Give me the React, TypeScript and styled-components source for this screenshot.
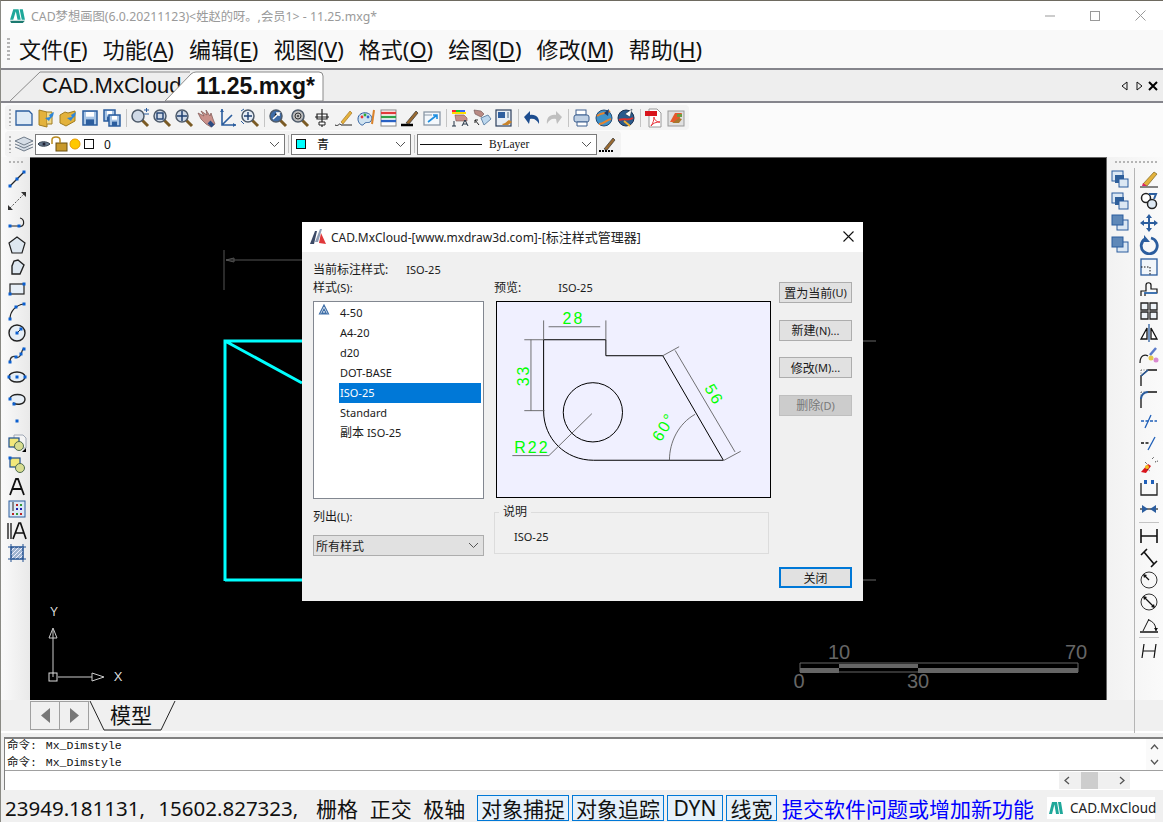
import React from 'react';
import styled, { createGlobalStyle } from 'styled-components';

const CJK = `"Noto Sans", "Noto Sans CJK SC", sans-serif`;
const BLUE = '#2b5d9e';
const LIGHT = '#a9c6e6';
const GOLD = '#e3b23c';
const DARK = '#222';

const GlobalStyle = createGlobalStyle`
  html, body { margin: 0; padding: 0; background: #f0f0f0; overflow: hidden; }
  * { box-sizing: border-box; }
`;

const Window = styled.div`
  width: 1163px;
  height: 822px;
  display: flex;
  flex-direction: column;
  overflow: hidden;
  background: #f0f0f0;
  border-top: 1px solid #6e6a60;
  border-left: 1px solid #8a8a84;
  font-family: ${CJK};
`;

const TitleBar = styled.div`
  height: 29px;
  flex: none;
  display: flex;
  align-items: center;
  background: #fff;
  padding-left: 8px;
  color: #9a9a9a;
  font-size: 12.3px;
  svg { flex: none; }
`;
const TitleText = styled.span`
  margin-left: 5px;
  white-space: nowrap;
`;
const WindowButtons = styled.div`
  margin-left: auto;
  display: flex;
  align-items: center;
  gap: 35px;
  padding-right: 17px;
  svg { display: block; }
`;

const MenuBar = styled.div`
  height: 38px;
  flex: none;
  display: flex;
  align-items: center;
  background: #f9f9f9;
  padding-left: 6px;
`;
const VGrip = styled.div`
  width: 3px;
  height: 22px;
  margin-right: 9px;
  background: repeating-linear-gradient(to bottom, #b5b5b5 0 2px, transparent 2px 4px);
`;
const MenuItem = styled.span`
  font-size: 22px;
  color: #111;
  white-space: nowrap;
  margin-right: 15px;
  line-height: 30px;
`;

const TabStrip = styled.div`
  height: 35px;
  flex: none;
  display: flex;
  align-items: stretch;
  background: #eee;
  border-top: 2px solid #85858c;
  border-bottom: 2px solid #85858c;
  padding-left: 9px;
  position: relative;
`;
const FileTab = styled.div<{ $active?: boolean }>`
  position: relative;
  width: ${(p) => (p.$active ? 160 : 180)}px;
  margin-left: ${(p) => (p.$active ? -25 : 0)}px;
  z-index: ${(p) => (p.$active ? 2 : 1)};
  padding-left: ${(p) => (p.$active ? 31 : 32)}px;
  padding-top: 1px;
  font-family: "Liberation Sans", "Noto Sans CJK SC", sans-serif;
  font-size: ${(p) => (p.$active ? 23 : 22)}px;
  font-weight: ${(p) => (p.$active ? 700 : 400)};
  line-height: 30px;
  color: #111;
  white-space: nowrap;
  overflow: hidden;
  svg { position: absolute; left: 0; top: 0; z-index: -1; }
`;
const TabArrows = styled.div`
  margin-left: auto;
  display: flex;
  align-items: center;
  gap: 4px;
  padding-right: 5px;
  svg { display: block; }
`;

const ToolRows = styled.div`
  height: 54px;
  flex: none;
  background: #fbfbfb;
  padding: 2px 0 0 4px;
`;
const ToolChip = styled.div<{ $w: number; $h: number }>`
  width: ${(p) => p.$w}px;
  height: ${(p) => p.$h}px;
  display: flex;
  align-items: center;
  background: #f3f3f3;
  border-radius: 4px;
  padding-left: 4px;
  margin-bottom: 1px;
`;
const SmallGrip = styled(VGrip)`
  height: 17px;
  width: 2px;
  margin-right: 2px;
`;
const Slot = styled.span`
  width: 22px;
  height: 22px;
  flex: none;
  display: flex;
  align-items: center;
  justify-content: center;
  svg { display: block; }
`;
const ToolSep = styled.span`
  width: 1px;
  height: 18px;
  margin: 0 2px 0 3px;
  flex: none;
  background: #c4c4c4;
`;
const Combo = styled.div<{ $w: number }>`
  width: ${(p) => p.$w}px;
  height: 21px;
  flex: none;
  display: flex;
  align-items: center;
  background: #fff;
  border: 1px solid #7a7a7a;
  font-size: 12px;
  color: #111;
  svg { display: block; flex: none; }
`;
const ComboChevron = styled.svg`
  margin-left: auto;
  margin-right: 4px;
  flex: none;
`;
const Swatch = styled.span<{ $fill: string }>`
  width: 10px;
  height: 10px;
  flex: none;
  margin-left: 4px;
  background: ${(p) => p.$fill};
  border: 1px solid #111;
`;
const ComboLabel = styled.span<{ $gap: number }>`
  margin-left: ${(p) => p.$gap}px;
`;
const LineSample = styled.span`
  width: 62px;
  height: 1px;
  margin-left: 2px;
  background: #111;
`;
const ByLayer = styled.span`
  margin-left: 7px;
  font-family: "Liberation Serif", serif;
  font-size: 11.5px;
`;

const Middle = styled.div`
  flex: none;
  height: 543px;
  display: flex;
`;
const LeftBar = styled.div`
  width: 29px;
  flex: none;
  display: flex;
  flex-direction: column;
  align-items: center;
  padding-top: 4px;
  padding-left: 2px;
  background: linear-gradient(to right, #fafafa, #e9e9e9);
`;
const HGrip = styled.div<{ $w: number }>`
  width: ${(p) => p.$w}px;
  height: 2px;
  flex: none;
  margin-bottom: 5px;
  background: repeating-linear-gradient(to right, #b5b5b5 0 2px, transparent 2px 4px);
`;
const Canvas = styled.div`
  width: 1077px;
  flex: none;
  position: relative;
  background: #000;
  border-top: 1px solid #666;
  border-right: 1px solid #666;
  overflow: hidden;
  > svg { position: absolute; left: 0; top: 0; }
`;
const RightBar = styled.div`
  flex: 1;
  display: flex;
  flex-direction: column;
  background: linear-gradient(to right, #f2f2f2, #fafafa);
  padding: 4px 0 0 2px;
`;
const RightGrip = styled(HGrip)`
  margin-left: 6px;
`;
const RightCols = styled.div`
  flex: 1;
  display: flex;
`;
const RightCol = styled.div<{ $rule?: boolean }>`
  width: ${(p) => (p.$rule ? 28 : 25)}px;
  flex: none;
  display: flex;
  flex-direction: column;
  padding-left: ${(p) => (p.$rule ? 3 : 0)}px;
  border-left: ${(p) => (p.$rule ? '1px solid #b5b5b5' : 'none')};
`;
const BarRule = styled.div`
  width: 20px;
  height: 1px;
  flex: none;
  margin: 2px 1px 2px;
  background: #c4c4c4;
`;

const Dialog = styled.div`
  position: absolute;
  left: 272px;
  top: 64px;
  width: 561px;
  height: 379px;
  background: #f0f0f0;
  display: flex;
  flex-direction: column;
  font-size: 11px;
  color: #1a1a1a;
`;
const Cjk = styled.span`
  font-size: 12px;
`;
const DialogTitle = styled.div`
  height: 30px;
  flex: none;
  display: flex;
  align-items: center;
  padding: 0 9px 2px 8px;
  background: #fff;
  font-size: 12px;
  color: #222;
  svg { display: block; flex: none; }
`;
const DialogTitleText = styled.span`
  margin-left: 5px;
`;
const TitleCjk = styled.span`
  font-size: 13px;
`;
const DialogClose = styled.svg`
  margin-left: auto;
`;
const DialogBody = styled.div`
  padding: 11px 11px 0;
`;
const CurrentRow = styled.div`
  height: 14px;
  line-height: 14px;
  display: flex;
  margin-bottom: 4px;
`;
const CurrentName = styled.span`
  margin-left: 18px;
`;
const Columns = styled.div`
  display: flex;
`;
const ListColumn = styled.div`
  width: 171px;
  flex: none;
`;
const PreviewColumn = styled.div`
  width: 277px;
  flex: none;
  margin-left: 10px;
`;
const ButtonColumn = styled.div`
  width: 73px;
  height: 306px;
  flex: none;
  margin: 1px 0 0 8px;
  display: flex;
  flex-direction: column;
`;
const FieldLabel = styled.div`
  height: 14px;
  line-height: 14px;
  margin-bottom: 6px;
  display: flex;
`;
const PreviewName = styled.span`
  margin-left: 37px;
`;
const StyleList = styled.div`
  height: 198px;
  padding-top: 1px;
  background: #fff;
  border: 1px solid #828790;
`;
const StyleRow = styled.div`
  height: 20px;
  display: flex;
  svg { display: block; margin: 1px 0 0 4px; }
`;
const RowIcon = styled.span`
  width: 25px;
  flex: none;
`;
const StyleName = styled.span<{ $selected?: boolean }>`
  flex: 1;
  margin-right: 2px;
  padding-left: 1px;
  line-height: 20px;
  background: ${(p) => (p.$selected ? '#0078d7' : 'transparent')};
  color: ${(p) => (p.$selected ? '#fff' : '#1a1a1a')};
`;
const PreviewBox = styled.div`
  width: 275px;
  height: 197px;
  margin-left: 2px;
  border: 1px solid #000;
  background: #f0f0ff;
  svg { display: block; }
`;
const ListLabel = styled(FieldLabel)`
  margin: 11px 0 11px;
`;
const DropDown = styled.div`
  height: 21px;
  display: flex;
  align-items: center;
  padding-left: 2px;
  background: #e1e1e1;
  border: 1px solid #adadad;
`;
const GroupBox = styled.div`
  position: relative;
  width: 275px;
  height: 42px;
  margin-top: 14px;
  padding: 16px 0 0 19px;
  border: 1px solid #dcdcdc;
  line-height: 15px;
`;
const GroupLegend = styled.span`
  position: absolute;
  left: 4px;
  top: -8px;
  padding: 0 4px;
  background: #f0f0f0;
  font-size: 12px;
  line-height: 14px;
`;
const DlgButton = styled.div<{ $disabled?: boolean; $primary?: boolean }>`
  height: 21px;
  flex: none;
  display: flex;
  align-items: center;
  justify-content: center;
  margin-bottom: 16.500px;
  white-space: nowrap;
  background: ${(p) => (p.$disabled ? '#cccccc' : '#e1e1e1')};
  border: ${(p) => (p.$primary ? '2px solid #0078d7' : p.$disabled ? '1px solid #bfbfbf' : '1px solid #adadad')};
  color: ${(p) => (p.$disabled ? '#787878' : '#1a1a1a')};
`;
const CloseButton = styled(DlgButton)`
  margin-top: auto;
  margin-bottom: 0;
`;

const LayoutTabs = styled.div`
  height: 33px;
  flex: none;
  display: flex;
  background: #f0f0f0;
  padding-left: 29px;
  position: relative;
  border-bottom: 2px solid #fff;
`;
const NavBtn = styled.div`
  width: 30px;
  height: 29px;
  flex: none;
  display: flex;
  align-items: center;
  justify-content: center;
  border: 1px solid #a0a0a0;
  margin-right: -1px;
  margin-top: 1px;
`;
const ModelTab = styled.div`
  position: relative;
  width: 87px;
  height: 30px;
  margin: 1px 0 0 1px;
  padding-left: 21px;
  font-size: 21px;
  line-height: 29px;
  color: #111;
  svg { position: absolute; left: 0; top: 0; }
`;
const BarTail = styled.span`
  position: absolute;
  left: 1133px;
  top: 0;
  bottom: -2px;
  width: 1px;
  background: #b5b5b5;
`;

const CommandBox = styled.div`
  height: 53px;
  flex: none;
  margin: 4px 0 0 3px;
  background: #fff;
  border-top: 2px solid #808080;
  border-left: 1px solid #808080;
  display: flex;
  flex-direction: column;
`;
const CommandLog = styled.div`
  height: 32px;
  flex: none;
  display: flex;
  border-bottom: 1px solid #a0a0a0;
`;
const CommandLines = styled.div`
  flex: 1;
  padding-left: 2px;
  margin-top: -2px;
  font-family: "Liberation Mono", "Noto Sans CJK SC", monospace;
  font-size: 11.5px;
  line-height: 17px;
  word-spacing: 2px;
  color: #111;
`;
const VScroll = styled.div`
  width: 17px;
  flex: none;
  display: flex;
  flex-direction: column;
  justify-content: space-between;
  align-items: center;
  padding: 5px 0;
  background: #fafafa;
`;
const CommandInput = styled.div`
  flex: 1;
  display: flex;
  justify-content: flex-end;
  padding-right: 33px;
`;
const HScroll = styled.div`
  width: 71px;
  height: 17px;
  margin-top: 1px;
  display: flex;
  align-items: center;
  justify-content: space-between;
  padding: 0 5px;
  background: #f0f0f0;
`;
const HThumb = styled.span`
  width: 17px;
  height: 17px;
  background: #cdcdcd;
  margin-right: 10px;
`;

const StatusBar = styled.div`
  flex: 1;
  margin-top: 3px;
  padding-bottom: 1px;
  display: flex;
  align-items: center;
  background: #f0f0f0;
  padding-left: 4px;
  font-size: 21px;
  color: #111;
  white-space: nowrap;
`;
const Coords = styled.span`
  width: 311px;
  flex: none;
  font-size: 20.5px;
  word-spacing: 8px;
`;
const StatusCell = styled.span`
  width: 53.67px;
  flex: none;
`;
const StatusToggle = styled.span<{ $w: number }>`
  width: ${(p) => p.$w}px;
  height: 26px;
  flex: none;
  margin-right: 3px;
  display: flex;
  align-items: center;
  justify-content: center;
  background: #e5f1fb;
  border: 1px solid #0078d7;
`;
const FeedbackLink = styled.span`
  color: #0000ff;
  margin-left: 2px;
  width: 265px;
  flex: none;
`;
const BrandBadge = styled.span`
  height: 22px;
  width: 108px;
  flex: none;
  display: flex;
  align-items: center;
  background: #fff;
  padding-left: 1px;
  font-size: 13.5px;
  color: #222;
  svg { display: block; flex: none; margin-right: 6px; }
`;

const Mag = ({ children, glass = '#cfd9e6' }: { children?: React.ReactNode; glass?: string }) => (
  <svg width="20" height="20" viewBox="0 0 20 20">
    <path d="M11 11l7 7" stroke="#7a5a24" strokeWidth="3" />
    <circle cx="8" cy="8" r="6" fill={glass} stroke="#4d5a6a" strokeWidth="1.5" />
    {children}
  </svg>
);

const Ico = ({ children }: { children: React.ReactNode }) => (
  <svg width="20" height="20" viewBox="0 0 20 20" fill="none">
    {children}
  </svg>
);

const Dot = ({ x, y }: { x: number; y: number }) => <rect x={x - 1.5} y={y - 1.5} width="3" height="3" fill="#0a5fd0" />;

const Floppy = ({ x = 3, y = 3, s = 14 }: { x?: number; y?: number; s?: number }) => (
  <g>
    <rect x={x} y={y} width={s} height={s} fill={LIGHT} stroke={BLUE} strokeWidth="1.5" />
    <rect x={x + 3} y={y + 1} width={s - 6} height={s / 3} fill="#fff" />
    <rect x={x + 3} y={y + s * 0.6} width={s - 6} height={s * 0.4} fill={BLUE} />
  </g>
);

const Folder = ({ tilt }: { tilt?: boolean }) => (
  <Ico>
    <path d={tilt ? 'M2 7l5-3 3 1 7-2v10l-9 5-6-3z' : 'M3 2l8 2v15l-8-2z'} fill={GOLD} stroke="#a07c20" />
    {!tilt && <path d="M11 4h5v12h-5" fill="#f2d98a" stroke="#a07c20" />}
    <path d="M18 4l-5 3 1 2-5 1 4 3 1-2 3-3z" fill="#2f86d8" />
  </Ico>
);

const topIcons: React.ReactNode[][] = [
  [
    <Ico><path d="M2 3h13l3 3v11H2z" fill="#dfeaf5" stroke={BLUE} strokeWidth="1.3" /></Ico>,
    <Folder />,
    <Folder tilt />,
    <Ico><Floppy /></Ico>,
    <Ico><Floppy x={2} y={2} s={11} /><Floppy x={7} y={7} s={11} /></Ico>,
  ],
  [
    <Mag><path d="M14 2h5M16.5 0v4M14 6h5" stroke={BLUE} /></Mag>,
    <Mag><rect x="5" y="5" width="6" height="6" stroke="#1f3f70" strokeWidth="1.4" fill="none" /></Mag>,
    <Mag><path d="M8 3v10M3 8h10" stroke="#1f3f70" strokeWidth="1.5" /></Mag>,
    <Ico><path d="M2 5l6 3-3-5 6 4-1-5 4 6 1-3 2 6 2 5-4 3-5-3-5-5z" fill="#c9908a" stroke="#7c5450" strokeWidth=".7" /><path d="M13 14l4 4" stroke="#2c4c82" strokeWidth="4" /></Ico>,
    <Ico><path d="M4 1v16h14M4 17L14 7" stroke={BLUE} strokeWidth="1.6" /><path d="M2 4l2-3 2 3M15 15l3 2-3 2" fill={BLUE} /></Ico>,
    <Mag glass="#e6edf5"><path d="M8 4v8M4 8h8" stroke="#1f3f70" strokeWidth="1.4" /><path d="M1 3l3-2M1 13l3 3" stroke={BLUE} /></Mag>,
  ],
  [
    <Mag glass="#3e6ba6"><path d="M5 11l6-6-3 0M11 5v3" stroke="#fff" strokeWidth="1.5" /></Mag>,
    <Mag glass="#bbb"><circle cx="8" cy="8" r="3" stroke="#333" fill="none" /><circle cx="8" cy="8" r="1" fill="#333" /></Mag>,
    <Ico><path d="M10 1v18M3 9h14M5 6h10v5H5z" stroke={DARK} strokeWidth="1.2" fill="#fff" /><path d="M7 14h6v3H7z" stroke={DARK} fill="#fff" /></Ico>,
    <Ico><path d="M1 17c4 2 4-3 6 0h11" stroke={DARK} /><path d="M7 14L16 3l2 2-9 11z" fill={GOLD} stroke="#a6762a" strokeWidth=".7" /></Ico>,
    <Ico><path d="M2 11c0-5 5-7 9-6s6 5 4 8-5 0-7 3-6-1-6-5z" fill="#cfe2f0" stroke={BLUE} /><circle cx="6" cy="9" r="1.4" fill="#e33" /><circle cx="9" cy="7" r="1.4" fill="#3a3" /><circle cx="12" cy="9" r="1.4" fill="#36c" /><path d="M16 16l2-14" stroke="#d9822b" strokeWidth="2" /></Ico>,
    <Ico><rect x="3" y="2" width="15" height="16" fill="#fff" stroke="#888" /><path d="M3 5h15" stroke="#e03a3a" strokeWidth="2.4" /><path d="M3 9h15" stroke="#2f9f48" strokeWidth="2.4" /><path d="M3 13h15" stroke="#2a62c4" strokeWidth="2.4" /></Ico>,
    <Ico><path d="M1 17h12" stroke="#000" strokeWidth="2.5" /><path d="M6 15L16 3l2 2-9 11z" fill="#9a6a30" stroke="#333" strokeWidth=".7" /></Ico>,
    <Ico><rect x="2" y="4" width="16" height="13" fill="#f4f8fc" stroke="#8a97a6" strokeWidth="1.3" /><path d="M2 7h8" stroke="#8a97a6" /><path d="M6 14l9-7M11 7h4v4" stroke="#1e8ee0" strokeWidth="1.6" /></Ico>,
  ],
  [
    <Ico><rect x="2" y="2" width="9" height="4" fill="#f23" /><rect x="6" y="2" width="4" height="4" fill="#1c3" /><rect x="10" y="2" width="5" height="4" fill="#36f" /><rect x="2" y="4" width="14" height="2" fill="#fd0" /><path d="M5 7h9l3 3v3H6z" fill="#c9908a" stroke="#7c5450" strokeWidth=".6" /><path d="M4 13v5M2 18h4M12 18l3-6 3 6M13 16h4" stroke="#234" /></Ico>,
    <Ico><path d="M2 2l7 1 3 3-3 3-6-3z" fill="#b98a84" stroke="#6c5050" strokeWidth=".6" /><path d="M9 10l7-3 3 4-7 6z" fill="#bcd7ee" stroke="#6688aa" /><path d="M3 12l4 5M3 12v3M3 12h3" stroke={DARK} /></Ico>,
    <Ico><rect x="2" y="2" width="15" height="16" fill="#e8eef5" stroke="#2c3f5c" strokeWidth="1.2" /><rect x="4" y="4" width="7" height="6" fill="#2f5f9f" /><path d="M13 4h2v6h-2z" fill="#9ab" /><path d="M8 16c3 0 5-3 7-4l3 2-4 3H9z" fill="#c9832a" /></Ico>,
  ],
  [
    <Ico><path d="M17 16c1-6-3-10-9-9V3L2 9l5 7 1-5c4-1 7 1 9 5z" fill="#1d4d8f" /></Ico>,
    <Ico><path d="M3 16c-1-6 3-10 9-9V3l6 6-5 7-1-5c-4-1-7 1-9 5z" fill="#bfbfbf" /></Ico>,
  ],
  [
    <Ico><rect x="4" y="2" width="10" height="5" fill="#fff" stroke="#3d5f8f" /><rect x="2" y="7" width="15" height="7" rx="2" fill="#bfd0e4" stroke="#3d5f8f" /><path d="M5 14h10v4H5z" fill="#fff" stroke="#3d5f8f" /></Ico>,
    <Ico><circle cx="10" cy="10" r="8" fill="#3f92c8" stroke="#274c75" /><path d="M3 8c5-4 9-2 13-5M5 16c5 0 7-4 12-5" stroke="#e8842c" strokeWidth="2" /><path d="M15 1l-5 4 4 3z" fill="#173c70" /></Ico>,
    <Ico><circle cx="10" cy="10" r="8" fill="#2a5a8c" stroke="#1a3050" /><path d="M3 12c5-2 9 1 14-2" stroke="#e0322c" strokeWidth="2" /><path d="M8 13l6 5" stroke="#f0b030" strokeWidth="2" /><path d="M16 1l-7 5 5 3z" fill="#fff" stroke="#123" strokeWidth=".5" /></Ico>,
  ],
  [
    <Ico><path d="M5 1h8l4 4v14H5z" fill="#fff" stroke="#999" /><rect x="1" y="3" width="12" height="5" fill="#d8141c" /><path d="M7 18c2-3 3-6 3-9 0 3 3 5 6 5-4 0-7 1-9 4z" stroke="#e8333a" strokeWidth="1" /></Ico>,
    <Ico><rect x="2" y="3" width="16" height="15" fill="#e0e0e0" stroke="#999" /><path d="M4 14l5-9h7l-4 9z" fill="#e5582c" /><path d="M6 15l7-5 3 1-3 4z" fill="#a5762c" /><path d="M11 6h5v3h-5z" fill="#6a9c40" /></Ico>,
  ],
];

const leftIcons: React.ReactNode[] = [
  <Ico><path d="M3 17L17 3" stroke={DARK} strokeWidth="1.2" /><Dot x={3} y={17} /><Dot x={17} y={3} /><Dot x={10} y={10} /></Ico>,
  <Ico><path d="M3 17L17 3" stroke="#555" strokeDasharray="2 1.5" /><path d="M1 19v-5l5 5zM19 1v5l-5-5z" fill="#333" /></Ico>,
  <Ico><path d="M3 13h9c6 2 6-7 1-8" stroke={DARK} strokeWidth="1.2" /><Dot x={3} y={13} /><Dot x={12} y={13} /></Ico>,
  <Ico><path d="M10 2l8 6-3 10H5L2 8z" fill="#dde7f0" stroke={DARK} strokeWidth="1.2" /></Ico>,
  <Ico><path d="M11 3l6 5-4 9H5V9l2-5z" fill="#dde7f0" stroke={DARK} strokeWidth="1.4" /></Ico>,
  <Ico><rect x="3" y="5" width="14" height="10" fill="#e6eef6" stroke={DARK} strokeWidth="1.2" /><Dot x={3} y={15} /><Dot x={17} y={5} /></Ico>,
  <Ico><path d="M3 18C3 10 9 4 17 3" stroke={DARK} strokeWidth="1.2" /><Dot x={3} y={18} /><Dot x={9} y={6} /><Dot x={17} y={3} /></Ico>,
  <Ico><circle cx="10" cy="10" r="8" fill="#e6eef6" stroke={DARK} strokeWidth="1.4" /><path d="M10 10l4-4" stroke={DARK} /><Dot x={10} y={10} /><Dot x={14} y={6} /></Ico>,
  <Ico><path d="M3 17c0-6 4-6 6-5s4 0 5-3 2-5 3-6" stroke="#333" strokeWidth="1.3" /><Dot x={3} y={17} /><Dot x={9} y={12} /><Dot x={14} y={9} /><Dot x={17} y={4} /></Ico>,
  <Ico><ellipse cx="10" cy="10" rx="8" ry="5" fill="#e6eef6" stroke={DARK} strokeWidth="1.4" /><Dot x={2} y={10} /><Dot x={10} y={10} /><Dot x={18} y={10} /></Ico>,
  <Ico><path d="M3 10c0-6 15-6 15 0s-8 6-12 4" fill="#e6eef6" stroke={DARK} strokeWidth="1.4" /><Dot x={3} y={10} /><Dot x={7} y={15} /></Ico>,
  <Ico><Dot x={10} y={10} /></Ico>,
  <Ico><path d="M7 2h9l3 3v10H7z" fill="#f4f4f4" stroke="#a0a8b5" /><rect x="2" y="5" width="10" height="9" fill="#f2e87a" stroke="#1c4e90" strokeWidth="1.2" /><circle cx="12" cy="13" r="4.5" fill="#d8dd90" stroke="#4d6a50" /><path d="M15 19l4-4v4z" fill="#000" /></Ico>,
  <Ico><rect x="3" y="3" width="10" height="9" fill="#f2e87a" stroke="#1c4e90" strokeWidth="1.2" /><circle cx="13" cy="13" r="4.5" fill="#d8dd90" stroke="#4d6a50" /><Dot x={3} y={3} /></Ico>,
  <Ico><path d="M3 18L9 2h2l6 16M5.500 12h9" stroke="#111" strokeWidth="1.8" /></Ico>,
  <Ico><rect x="2" y="2" width="16" height="16" fill="#dbe8f5" stroke={BLUE} /><path d="M6 3v9" stroke="#666" strokeWidth="1.5" /><rect x="9" y="5" width="2" height="2" fill="#b22" /><rect x="13" y="5" width="2" height="2" fill="#393" /><rect x="9" y="9" width="2" height="2" fill="#22a" /><rect x="13" y="9" width="2" height="2" fill="#22a" /><rect x="5" y="14" width="2" height="2" fill="#b22" /><rect x="9" y="14" width="2" height="2" fill="#393" /><rect x="13" y="14" width="2" height="2" fill="#b22" /></Ico>,
  <Ico><path d="M1 2v16M4 2v16" stroke="#111" strokeWidth="1.3" /><path d="M6 18L12 2h1.500L19 18M8.500 12h8" stroke="#111" strokeWidth="1.7" /></Ico>,
  <Ico><rect x="4" y="4" width="12" height="12" fill="#9fb4cf" stroke="#1f4f90" /><path d="M4 8l4-4M4 12l8-8M4 16L16 4M8 16l8-8M12 16l4-4" stroke="#eef" /><path d="M1 4h18M1 16h18M4 1v18M16 1v18" stroke="#1f4f90" /></Ico>,
];

const Stack = ({ top }: { top: boolean }) => (
  <Ico>
    {top ? (
      <>
        <rect x="7" y="7" width="11" height="10" fill="#dbe7f3" stroke={BLUE} />
        <rect x="2" y="2" width="11" height="10" fill="#5f88b8" stroke={BLUE} />
      </>
    ) : (
      <>
        <rect x="2" y="2" width="11" height="10" fill="#dbe7f3" stroke={BLUE} />
        <rect x="5" y="6" width="9" height="8" fill="#2f5f9a" />
        <rect x="9" y="10" width="9" height="8" fill="#dbe7f3" stroke={BLUE} />
      </>
    )}
  </Ico>
);

const orderIcons: React.ReactNode[] = [<Stack top={false} />, <Stack top={false} />, <Stack top />, <Stack top />];

const rightIcons: React.ReactNode[] = [
  <Ico><path d="M1 18h18" stroke="#111" /><path d="M4 15L15 3l3 2L8 17z" fill={GOLD} stroke="#7a6420" strokeWidth=".7" /><path d="M3 17l1-3 4 3z" fill="#d26" /></Ico>,
  <Ico><circle cx="7" cy="7" r="4.5" fill="#fff" stroke="#222" strokeWidth="1.5" /><circle cx="13" cy="13" r="4.5" fill="#dde8f3" stroke="#222" strokeWidth="1.5" /><path d="M10 3h7l-2 5" stroke={BLUE} strokeWidth="2" /></Ico>,
  <Ico><path d="M10 1l3 4h-2v4h4V7l4 3-4 3v-2h-4v4h2l-3 4-3-4h2v-4H5v2l-4-3 4-3v2h4V5H7z" fill={BLUE} /></Ico>,
  <Ico><path d="M6 4a8 8 0 1 0 6-1" stroke={BLUE} strokeWidth="2.8" /><path d="M5 0v7h6" fill={BLUE} /></Ico>,
  <Ico><rect x="2" y="2" width="16" height="16" fill="#f2f6fa" stroke={BLUE} strokeWidth="1.3" /><path d="M2 10h9v8" stroke="#111" strokeDasharray="1.5 1.5" /></Ico>,
  <Ico><path d="M2 17v-5h5V6c0-3 5-3 5 0v4h6v4H6v3" stroke="#111" strokeWidth="1.2" /><path d="M5 14h13" stroke="#2a6fc0" strokeWidth="1.5" /></Ico>,
  <Ico><path d="M2 2h7v7H2zM11 2h7v7h-7zM2 11h7v7H2zM11 11h7v7h-7z" stroke="#222" strokeWidth="1.3" fill="#eef3f8" /></Ico>,
  <Ico><path d="M10 1v18" stroke={BLUE} strokeWidth="1.3" /><path d="M8 5v11H2zM12 5v11h6z" stroke="#111" strokeWidth="1.3" fill="#fff" /></Ico>,
  <Ico><path d="M1 18c0-8 5-9 8-7" stroke="#222" strokeWidth="1.3" /><circle cx="12" cy="13" r="2.5" fill="#e6c84a" /><circle cx="17" cy="15" r="2.5" fill="#d98ad0" /><path d="M11 10l6-7" stroke="#5a7ac8" strokeWidth="2.5" /></Ico>,
  <Ico><path d="M2 19V9l7-6h9" stroke="#111" strokeWidth="1.3" /><path d="M2 3h7M2 3v6" stroke="#666" strokeDasharray="1 1.5" /><path d="M2 9l7-6" stroke={BLUE} strokeWidth="1.5" /></Ico>,
  <Ico><path d="M2 19V9M8 3h10" stroke="#111" strokeWidth="1.3" /><path d="M2 3h6M2 3v6" stroke="#666" strokeDasharray="1 1.5" /><path d="M2 10C2 6 5 3 9 3" stroke={BLUE} strokeWidth="2" /></Ico>,
  <Ico><path d="M2 10h16" stroke="#1f5fb8" strokeWidth="1.3" strokeDasharray="3 1.5" /><path d="M6 17l6-13" stroke="#1f5fb8" strokeWidth="1.3" /></Ico>,
  <Ico><path d="M2 10h9" stroke="#111" strokeWidth="1.3" strokeDasharray="3 1.5" /><path d="M9 17l7-13" stroke="#1f5fb8" strokeWidth="1.3" /></Ico>,
  <Ico><path d="M2 17l7-8 3 2-5 7z" fill="#d8141c" /><path d="M6 7l2 2M8 14l3 2M13 4l2-2M16 7l3-1" stroke="#333" strokeDasharray="1 1" /><circle cx="8" cy="12" r="2" fill="#f2c020" /></Ico>,
  <Ico><path d="M2 6v12h16V6" stroke="#222" strokeWidth="1.3" /><rect x="5" y="3" width="3" height="4" fill="#1f5fb8" /><rect x="12" y="3" width="3" height="4" fill="#1f5fb8" /></Ico>,
  <Ico><path d="M1 10h18" stroke="#222" strokeWidth="1.2" /><path d="M3 6l6 4-6 4zM17 6l-6 4 6 4z" fill={BLUE} /></Ico>,
];

const dimIcons: React.ReactNode[] = [
  <Ico><path d="M2 3v14M18 3v14M2 10h16" stroke="#111" strokeWidth="1.6" /></Ico>,
  <Ico><path d="M2 7L8 1M12 19l6-6M5 4l10 12" stroke="#111" strokeWidth="1.6" /></Ico>,
  <Ico><circle cx="10" cy="10" r="8" stroke="#333" /><path d="M10 10L5 5" stroke="#111" strokeWidth="1.3" /><path d="M4 4l4 1-3 3z" fill="#111" /></Ico>,
  <Ico><circle cx="10" cy="10" r="8" stroke="#333" /><path d="M5 5l10 10" stroke="#111" strokeWidth="1.3" /><path d="M4 4l4 1-3 3zM16 16l-4-1 3-3z" fill="#111" /></Ico>,
  <Ico><path d="M1 18h18" stroke="#111" strokeWidth="1.5" /><path d="M4 17L10 5" stroke="#111" /><path d="M9 6c5 1 8 5 8 11" stroke="#111" /><path d="M15 14h4l-2 3z" fill="#111" /></Ico>,
];

const Chevron = () => (
  <ComboChevron width="11" height="7" viewBox="0 0 11 7" fill="none">
    <path d="M1 1l4.500 4.500L10 1" stroke="#555" />
  </ComboChevron>
);

const green = { fill: '#00ff00', fontFamily: '"Liberation Sans", sans-serif', fontSize: 48, letterSpacing: 6 };

const PreviewDrawing = () => (
  <svg width="273" height="195" viewBox="20 20 820 585" fill="none">
    <path d="M160 133H347V181H518L700 495H310C225 495 160 430 160 347Z" stroke="#000" strokeWidth="3" />
    <circle cx="308" cy="351" r="89" stroke="#000" strokeWidth="3" />
    <path
      d="M160 75V133M347 75V133M175 94H330M102 133H160M102 346H163M122 133V346M305 355L176 481H66M518 181L567 154M702 495L752 468M555 165L735 470M538 495C538 440 565 385 615 357"
      stroke="#555"
      strokeWidth="2.5"
    />
    <text {...green} x="217" y="87">28</text>
    <text {...green} x="115" y="273" transform="rotate(-90 115 273)">33</text>
    <text {...green} x="72" y="472">R22</text>
    <text {...green} x="513" y="442" transform="rotate(-60 513 442)">60°</text>
    <text {...green} x="642" y="278" transform="rotate(60 642 278)">56</text>
  </svg>
);

const CanvasDrawing = () => (
  <svg width="1076" height="542" viewBox="30 158 1076 542" fill="none">
    <path d="M224 250V290M226 260H302M226 260l8-2v4z" stroke="#555" />
    <path d="M225 581V341H302M225 341L302 383M225 580H302" stroke="#00ffff" strokeWidth="3" />
    <path d="M863 341H876M863 580H876" stroke="#666" />
    <path d="M53 677V630M58 677H92" stroke="#ccc" />
    <rect x="49" y="673" width="8" height="8" stroke="#ddd" />
    <path d="M53 628l-4 10h8zM104 677l-12-4v8z" stroke="#ccc" />
    <text x="54" y="616" fill="#ddd" fontFamily="Liberation Sans" fontSize="12" textAnchor="middle">Y</text>
    <text x="118" y="681" fill="#ddd" fontFamily="Liberation Sans" fontSize="13" textAnchor="middle">X</text>
    <path d="M800 663h278v9H800z" stroke="#666" />
    <path d="M800 668h39v5H800zM839 664h79v4H839zM918 668h160v5H918z" fill="#666" />
    <g fill="#666" fontFamily="Liberation Sans" fontSize="20" textAnchor="middle">
      <text x="839" y="659">10</text>
      <text x="1076" y="659">70</text>
      <text x="799" y="688">0</text>
      <text x="918" y="688">30</text>
    </g>
  </svg>
);

const menus = [
  ['文件(', 'F', ')'],
  ['功能(', 'A', ')'],
  ['编辑(', 'E', ')'],
  ['视图(', 'V', ')'],
  ['格式(', 'O', ')'],
  ['绘图(', 'D', ')'],
  ['修改(', 'M', ')'],
  ['帮助(', 'H', ')'],
];

const styles = ['4-50', 'A4-20', 'd20', 'DOT-BASE', 'ISO-25', 'Standard'];

export default function App() {
  return (
    <Window>
      <GlobalStyle />
      <TitleBar>
        <svg width="17" height="17" viewBox="0 0 16 16">
          <path d="M1 12L4 2h3L4 12zM6 2h3l2 10H8zM10 2h3l2 10h-3z" fill="#1fa89a" />
          <path d="M1 13h14l-2 2H2z" fill="#1c7a70" />
        </svg>
        <TitleText>CAD梦想画图(6.0.20211123)&lt;姓赵的呀。,会员1&gt; - 11.25.mxg*</TitleText>
        <WindowButtons>
          <svg width="10" height="10" viewBox="0 0 10 10"><path d="M0 5h10" stroke="#999" /></svg>
          <svg width="10" height="10" viewBox="0 0 10 10"><rect x=".5" y=".5" width="9" height="9" fill="none" stroke="#999" /></svg>
          <svg width="11" height="11" viewBox="0 0 11 11"><path d="M.5.5l10 10M10.500.5l-10 10" stroke="#999" /></svg>
        </WindowButtons>
      </TitleBar>

      <MenuBar>
        <VGrip />
        {menus.map(([a, k, b]) => (
          <MenuItem key={a}>{a}<u>{k}</u>{b}</MenuItem>
        ))}
      </MenuBar>

      <TabStrip>
        <FileTab>
          <svg width="180" height="31" viewBox="0 0 180 31" fill="none">
            <path d="M0 31L30 2H180" stroke="#8a8a8a" />
          </svg>
          CAD.MxCloud
        </FileTab>
        <FileTab $active>
          <svg width="160" height="31" viewBox="0 0 160 31">
            <path d="M0 31L26 4Q28 2 31 2H154Q158 2 158 6V31Z" fill="#fff" stroke="#8a8a8a" />
          </svg>
          11.25.mxg*
        </FileTab>
        <TabArrows>
          <svg width="10" height="10" viewBox="0 0 10 10" fill="none"><path d="M7 1L2 5l5 4z" stroke="#111" /></svg>
          <svg width="10" height="10" viewBox="0 0 10 10" fill="none"><path d="M3 1l5 4-5 4z" stroke="#111" /></svg>
          <svg width="10" height="10" viewBox="0 0 10 10" fill="none"><path d="M1 1l8 8M9 1L1 9" stroke="#000" strokeWidth="2" /></svg>
        </TabArrows>
      </TabStrip>

      <ToolRows>
        <ToolChip $w={684} $h={25}>
          <SmallGrip />
          {topIcons.map((group, i) => (
            <React.Fragment key={i}>
              {i > 0 && <ToolSep />}
              {group.map((icon, j) => <Slot key={j}>{icon}</Slot>)}
            </React.Fragment>
          ))}
        </ToolChip>
        <ToolChip $w={616} $h={26}>
          <SmallGrip />
          <Slot>
            <Ico><path d="M1 7l9-4 9 4-9 4zM1 10l9 4 9-4M1 13l9 4 9-4" fill="#d5dde6" stroke="#6e7a88" /></Ico>
          </Slot>
          <Combo $w={250}>
            <svg width="60" height="16" viewBox="0 0 60 16" fill="none">
              <path d="M2 8c2-3 9-3 12 0-3 3-10 3-12 0z" fill="#66788c" stroke="#33404e" />
              <circle cx="8" cy="8" r="1.5" fill="#223" />
              <rect x="20" y="7" width="11" height="8" fill="#c8992c" stroke="#6b5010" />
              <path d="M16 8V4c0-4 8-4 8 0v3" stroke="#b88a20" strokeWidth="1.5" />
              <circle cx="39" cy="8" r="5" fill="#ffc800" stroke="#e89a00" />
              <rect x="48.500" y="3.500" width="9" height="9" fill="#fff" stroke="#111" />
            </svg>
            <ComboLabel $gap={8}>0</ComboLabel>
            <Chevron />
          </Combo>
          <ToolSep />
          <Combo $w={120}>
            <Swatch $fill="#00ffff" />
            <ComboLabel $gap={11}>青</ComboLabel>
            <Chevron />
          </Combo>
          <ToolSep />
          <Combo $w={180}>
            <LineSample />
            <ByLayer>ByLayer</ByLayer>
            <Chevron />
          </Combo>
          <Slot>
            <Ico><path d="M1 17h14" stroke="#000" strokeWidth="2" strokeDasharray="2 1" /><path d="M6 15L15 4l2 2-8 10z" fill="#9a6a30" stroke="#333" strokeWidth=".7" /></Ico>
          </Slot>
        </ToolChip>
      </ToolRows>

      <Middle>
        <LeftBar>
          <HGrip $w={16} />
          {leftIcons.map((icon, i) => <Slot key={i}>{icon}</Slot>)}
        </LeftBar>
        <Canvas>
          <CanvasDrawing />
          <Dialog>
            <DialogTitle>
              <svg width="16" height="16" viewBox="0 0 16 16">
                <path d="M0 16L5 3h2L4 16z" fill="#3c4a66" />
                <path d="M5 14L10 1h2L8 14z" fill="#8d9cb4" />
                <path d="M9 15l2-10 5 11z" fill="#e0373a" />
              </svg>
              <DialogTitleText>CAD.MxCloud-[www.mxdraw3d.com]-[<TitleCjk>标注样式管理器</TitleCjk>]</DialogTitleText>
              <DialogClose width="11" height="11" viewBox="0 0 11 11">
                <path d="M.5.5l10 10M10.500.5l-10 10" stroke="#111" strokeWidth="1.1" />
              </DialogClose>
            </DialogTitle>
            <DialogBody>
              <CurrentRow>
                <Cjk>当前标注样式:</Cjk>
                <CurrentName>ISO-25</CurrentName>
              </CurrentRow>
              <Columns>
                <ListColumn>
                  <FieldLabel><Cjk>样式</Cjk>(S):</FieldLabel>
                  <StyleList>
                    {styles.map((s, i) => (
                      <StyleRow key={s}>
                        <RowIcon>
                          {i === 0 && (
                            <svg width="12" height="12" viewBox="0 0 12 12" fill="none">
                              <path d="M6 1l4.500 9h-9zM6 5l2 4H4z" stroke="#3f6fa8" strokeWidth="1.2" />
                            </svg>
                          )}
                        </RowIcon>
                        <StyleName $selected={s === 'ISO-25'}>{s}</StyleName>
                      </StyleRow>
                    ))}
                    <StyleRow>
                      <RowIcon />
                      <StyleName><Cjk>副本</Cjk> ISO-25</StyleName>
                    </StyleRow>
                  </StyleList>
                  <ListLabel><Cjk>列出</Cjk>(L):</ListLabel>
                  <DropDown>
                    <Cjk>所有样式</Cjk>
                    <Chevron />
                  </DropDown>
                </ListColumn>
                <PreviewColumn>
                  <FieldLabel>
                    <Cjk>预览:</Cjk>
                    <PreviewName>ISO-25</PreviewName>
                  </FieldLabel>
                  <PreviewBox>
                    <PreviewDrawing />
                  </PreviewBox>
                  <GroupBox>
                    <GroupLegend>说明</GroupLegend>
                    ISO-25
                  </GroupBox>
                </PreviewColumn>
                <ButtonColumn>
                  <DlgButton><Cjk>置为当前</Cjk>(U)</DlgButton>
                  <DlgButton><Cjk>新建</Cjk>(N)...</DlgButton>
                  <DlgButton><Cjk>修改</Cjk>(M)...</DlgButton>
                  <DlgButton $disabled><Cjk>删除</Cjk>(D)</DlgButton>
                  <CloseButton $primary><Cjk>关闭</Cjk></CloseButton>
                </ButtonColumn>
              </Columns>
            </DialogBody>
          </Dialog>
        </Canvas>
        <RightBar>
          <RightGrip $w={44} />
          <RightCols>
            <RightCol>
              {orderIcons.map((icon, i) => <Slot key={i}>{icon}</Slot>)}
            </RightCol>
            <RightCol $rule>
              {rightIcons.map((icon, i) => <Slot key={i}>{icon}</Slot>)}
              <BarRule />
              {dimIcons.map((icon, i) => <Slot key={i}>{icon}</Slot>)}
              <BarRule />
              <Slot>
                <Ico><path d="M5 3L3 17M17 3l-2 14M4 10h12" stroke="#111" strokeWidth="1.2" /></Ico>
              </Slot>
            </RightCol>
          </RightCols>
        </RightBar>
      </Middle>

      <LayoutTabs>
        <NavBtn>
          <svg width="9" height="15" viewBox="0 0 9 15"><path d="M9 0v15L0 7.500z" fill="#777" /></svg>
        </NavBtn>
        <NavBtn>
          <svg width="9" height="15" viewBox="0 0 9 15"><path d="M0 0v15l9-7.500z" fill="#777" /></svg>
        </NavBtn>
        <ModelTab>
          <svg width="87" height="30" viewBox="0 0 87 30" fill="none">
            <path d="M1 0L15 29H72L86 0" stroke="#222" />
          </svg>
          模型
        </ModelTab>
        <BarTail />
      </LayoutTabs>

      <CommandBox>
        <CommandLog>
          <CommandLines>
            <div>命令: Mx_Dimstyle</div>
            <div>命令: Mx_Dimstyle</div>
          </CommandLines>
          <VScroll>
            <svg width="9" height="6" viewBox="0 0 9 6" fill="none"><path d="M1 5l3.500-4L8 5" stroke="#555" strokeWidth="1.3" /></svg>
            <svg width="9" height="6" viewBox="0 0 9 6" fill="none"><path d="M1 1l3.500 4L8 1" stroke="#555" strokeWidth="1.3" /></svg>
          </VScroll>
        </CommandLog>
        <CommandInput>
          <HScroll>
            <svg width="6" height="9" viewBox="0 0 6 9" fill="none"><path d="M5 1L1 4.500 5 8" stroke="#555" strokeWidth="1.3" /></svg>
            <HThumb />
            <svg width="6" height="9" viewBox="0 0 6 9" fill="none"><path d="M1 1l4 3.500L1 8" stroke="#555" strokeWidth="1.3" /></svg>
          </HScroll>
        </CommandInput>
      </CommandBox>

      <StatusBar>
        <Coords>23949.181131, 15602.827323,</Coords>
        <StatusCell>栅格</StatusCell>
        <StatusCell>正交</StatusCell>
        <StatusCell>极轴</StatusCell>
        <StatusToggle $w={92}>对象捕捉</StatusToggle>
        <StatusToggle $w={92}>对象追踪</StatusToggle>
        <StatusToggle $w={56}>DYN</StatusToggle>
        <StatusToggle $w={51}>线宽</StatusToggle>
        <FeedbackLink>提交软件问题或增加新功能</FeedbackLink>
        <BrandBadge>
          <svg width="16" height="16" viewBox="0 0 16 16">
            <path d="M1 14L4 2h3l-3 12zM6 2h3l2 12H8zM10 2h3l2 12h-3z" fill="#1fa89a" />
          </svg>
          CAD.MxCloud
        </BrandBadge>
      </StatusBar>
    </Window>
  );
}
